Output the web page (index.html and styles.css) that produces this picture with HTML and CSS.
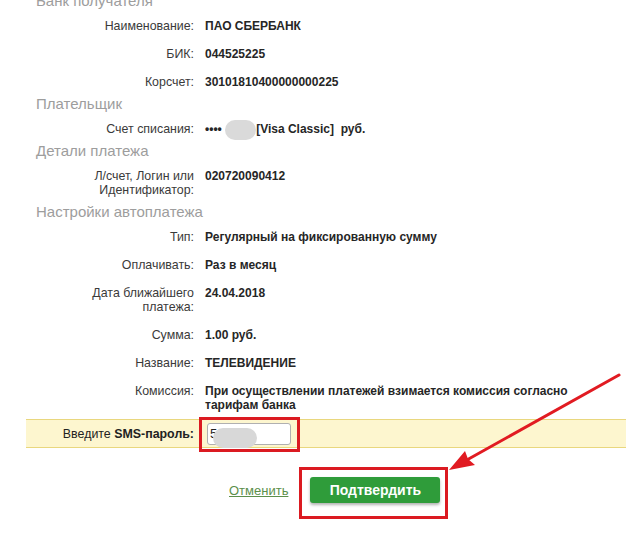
FILE: index.html
```html
<!DOCTYPE html>
<html lang="ru">
<head>
<meta charset="utf-8">
<title>Автоплатеж</title>
<link rel="stylesheet" href="styles.css">
</head>
<body>
<div class="page">
  <h3 class="section">Банк получателя</h3>
  <div class="row"><div class="label">Наименование:</div><div class="value">ПАО СБЕРБАНК</div></div>
  <div class="row"><div class="label">БИК:</div><div class="value">044525225</div></div>
  <div class="row"><div class="label">Корсчет:</div><div class="value">30101810400000000225</div></div>

  <h3 class="section">Плательщик</h3>
  <div class="row"><div class="label">Счет списания:</div><div class="value">•••• <span class="mask"></span>[Visa Classic]&nbsp; руб.</div></div>

  <h3 class="section">Детали платежа</h3>
  <div class="row"><div class="label">Л/счет, Логин или<br>Идентификатор:</div><div class="value">020720090412</div></div>

  <h3 class="section">Настройки автоплатежа</h3>
  <div class="row"><div class="label">Тип:</div><div class="value">Регулярный на фиксированную сумму</div></div>
  <div class="row"><div class="label">Оплачивать:</div><div class="value">Раз в месяц</div></div>
  <div class="row"><div class="label">Дата ближайшего<br>платежа:</div><div class="value">24.04.2018</div></div>
  <div class="row"><div class="label">Сумма:</div><div class="value">1.00 руб.</div></div>
  <div class="row"><div class="label">Название:</div><div class="value">ТЕЛЕВИДЕНИЕ</div></div>
  <div class="row"><div class="label">Комиссия:</div><div class="value">При осуществлении платежей взимается комиссия согласно тарифам банка</div></div>

  <div class="sms-band">
    <label class="sms-label" for="sms">Введите <b>SMS-пароль:</b></label>
    <input class="sms-input" id="sms" type="text" value="5">
  </div>

  <div class="actions">
    <a class="cancel" href="#">Отменить</a>
    <button class="confirm" type="button">Подтвердить</button>
  </div>
</div>

<div class="blur-mask"></div>
<div class="hl hl-input"></div>
<div class="hl hl-button"></div>
<svg class="arrow" width="637" height="546" viewBox="0 0 637 546" aria-hidden="true">
  <line x1="619" y1="375" x2="465" y2="461" stroke="#e11b22" stroke-width="3" stroke-linecap="round"/>
  <polygon points="449,470 465,451 468,459 475,465" fill="#e11b22"/>
</svg>
</body>
</html>
```

FILE: styles.css
```css
html, body {
  margin: 0;
  padding: 0;
  background: #ffffff;
}

body {
  width: 637px;
  height: 546px;
  overflow: hidden;
  font-family: "Liberation Sans", Arial, sans-serif;
  color: #333333;
}

.page {
  display: flow-root;
  margin-top: -7px;
}

.section {
  margin: 0 0 3px 0;
  padding-left: 36px;
  font-size: 15px;
  line-height: 16px;
  font-weight: normal;
  color: #9d9d9d;
}

.row {
  display: grid;
  grid-template-columns: 194px 385px;
  column-gap: 11px;
  padding: 7px 0;
  line-height: 14px;
}

.label {
  text-align: right;
  font-size: 12.4px;
  color: #3a3a3a;
}

.value {
  font-size: 12px;
  font-weight: bold;
  color: #262626;
}

.mask {
  display: inline-block;
  width: 31px;
  height: 20px;
  margin: -6px 0 -6px 0;
  vertical-align: middle;
  border-radius: 10px;
  background: #dadada;
  filter: blur(0.6px);
}

.sms-band {
  display: grid;
  grid-template-columns: 168px 84px;
  column-gap: 13px;
  align-items: center;
  margin: 0 0 0 26px;
  width: 600px;
  height: 27px;
  background: #fdf6cf;
  border-top: 1px solid #e9d77e;
  border-bottom: 1px solid #e9d77e;
}

.sms-label {
  text-align: right;
  font-size: 12.4px;
  color: #222222;
}

.sms-input {
  box-sizing: border-box;
  width: 84px;
  height: 22px;
  margin: 0;
  padding: 0 2px;
  border: 1px solid #b0b0b0;
  border-radius: 3px;
  background: #ffffff;
  font-family: "Liberation Sans", Arial, sans-serif;
  font-size: 13px;
  color: #222222;
}

.actions {
  display: flex;
  align-items: center;
  gap: 22px;
  margin-top: 29px;
  padding-left: 229px;
}

.cancel {
  font-size: 13px;
  color: #5c8f4b;
  text-decoration: underline;
}

.confirm {
  width: 130px;
  height: 26px;
  padding: 0;
  border: none;
  border-radius: 3px;
  background: #2f9c3a;
  box-shadow: 0 2px 3px rgba(0, 0, 0, 0.3);
  font-family: "Liberation Sans", Arial, sans-serif;
  font-size: 14px;
  font-weight: bold;
  color: #ffffff;
}

.blur-mask {
  position: absolute;
  left: 213px;
  top: 428px;
  width: 44px;
  height: 20px;
  border-radius: 10px;
  background: #d8d8d8;
  filter: blur(0.6px);
}

.hl {
  position: absolute;
  box-sizing: border-box;
  border: 3px solid #db1a21;
}

.hl-input {
  left: 199px;
  top: 417px;
  width: 101px;
  height: 35px;
}

.hl-button {
  left: 299px;
  top: 467px;
  width: 149px;
  height: 52px;
}

.arrow {
  position: absolute;
  left: 0;
  top: 0;
  pointer-events: none;
}
```
